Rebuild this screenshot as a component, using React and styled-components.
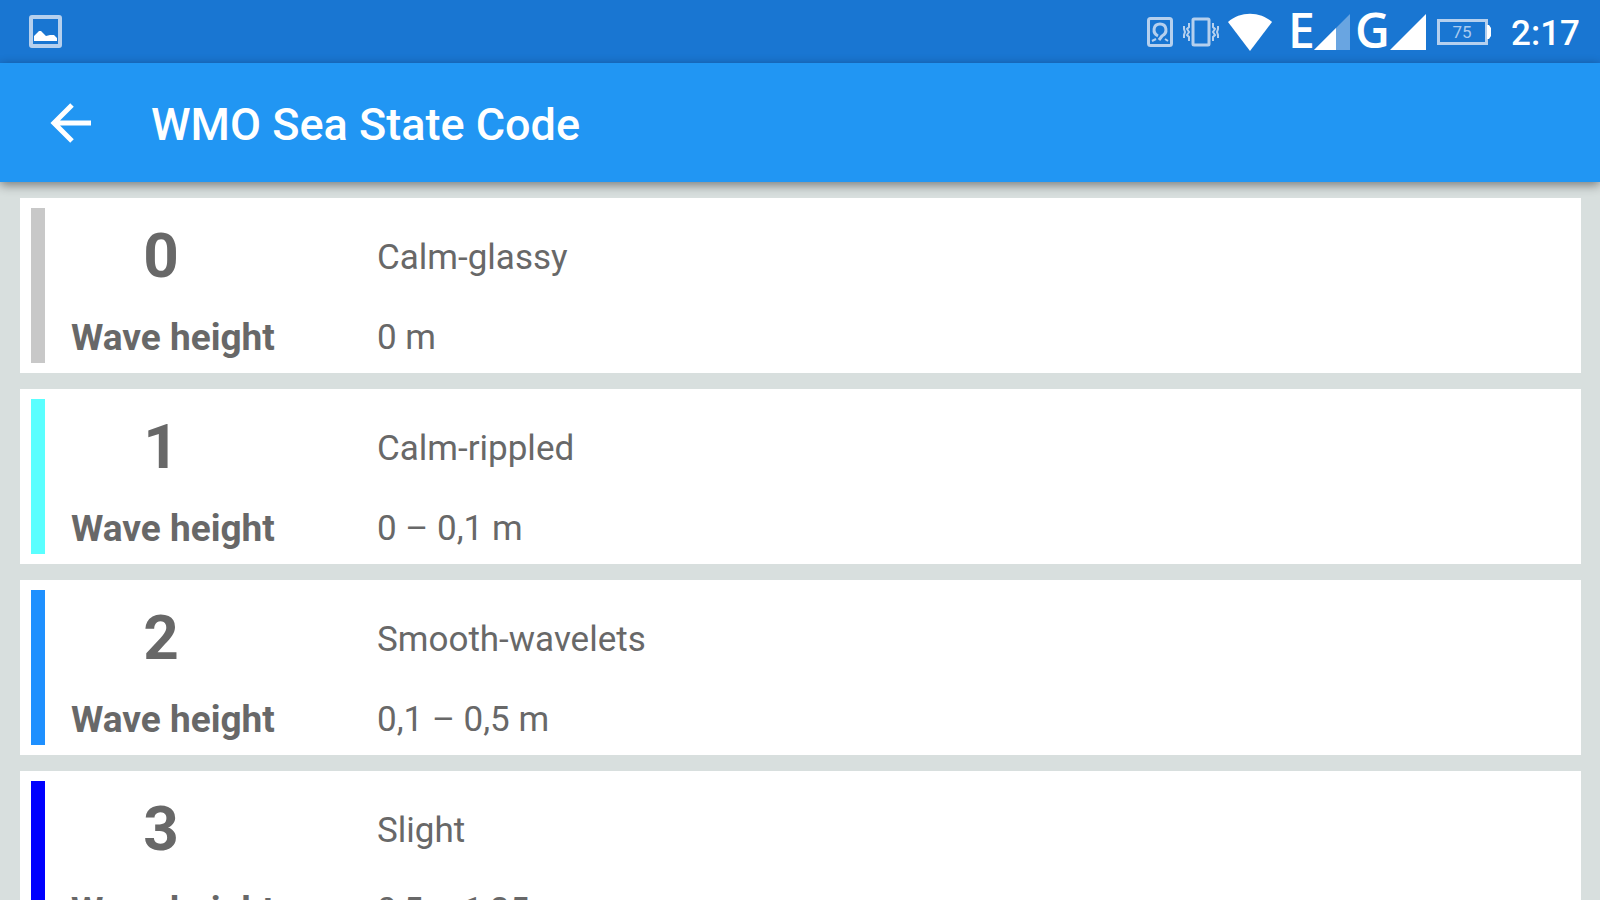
import React from 'react';
import styled, { createGlobalStyle } from 'styled-components';

const GlobalStyle = createGlobalStyle`
  html,
  body {
    margin: 0;
    background: #d8dfde;
    overflow: hidden;
  }

  * {
    box-sizing: border-box;
  }
`;

const Screen = styled.div`
  height: 100vh;
  display: flex;
  flex-direction: column;
  overflow: hidden;
  font-family: Roboto, 'Liberation Sans', sans-serif;
  color: #686868;
`;

const StatusBar = styled.div`
  flex: none;
  height: 63px;
  padding: 0 20px 0 29px;
  display: flex;
  align-items: center;
  justify-content: space-between;
  background: #1976d2;
  color: #ffffff;
`;

const StatusGroup = styled.div`
  display: flex;
  align-items: center;
`;

const StatusIcon = styled.svg`
  display: block;
  flex: none;
  margin-right: ${props => props.$gap || 0}px;
`;

const NetworkType = styled.span`
  width: ${props => props.$width}px;
  font-family: 'Open Sans', 'Noto Sans', sans-serif;
  font-size: 48px;
  font-weight: 600;
  line-height: 56px;
  padding-bottom: 4px;
`;

const BatteryText = styled.text`
  font-family: Roboto, sans-serif;
  font-size: 17px;
  fill: #a9cbef;
`;

const Clock = styled.time`
  padding-top: 4px;
  font-size: 35px;
  font-weight: 500;
  line-height: 56px;
`;

const AppBar = styled.header`
  position: relative;
  z-index: 1;
  flex: none;
  height: 119px;
  padding-left: 50px;
  display: flex;
  align-items: center;
  gap: 59px;
  background: #2196f3;
  box-shadow: 0 3px 10px rgba(0, 0, 0, 0.45);
`;

const BackButton = styled.button`
  padding: 0;
  border: 0;
  background: none;
  cursor: pointer;
`;

const Title = styled.h1`
  margin: 0;
  padding-top: 4px;
  color: #ffffff;
  font-size: 45px;
  font-weight: 500;
  line-height: 60px;
`;

const CodeList = styled.ul`
  flex: 1;
  min-height: 0;
  margin: 0;
  padding: 16px 19px 0 20px;
  display: flex;
  flex-direction: column;
  gap: 16px;
  overflow: hidden;
  list-style: none;
`;

const Card = styled.li`
  flex: none;
  padding: 10px 11px;
  display: flex;
  gap: 26px;
  background: #ffffff;
`;

const ColorStrip = styled.div`
  width: 14px;
  background: ${props => props.$color};
`;

const CardGrid = styled.div`
  flex: 1;
  display: grid;
  grid-template-columns: 306px 1fr;
  grid-template-rows: 100px 50px;
  row-gap: 5px;
  align-items: center;
`;

const Code = styled.strong`
  width: 180px;
  padding-bottom: 4px;
  font-size: 62px;
  font-weight: 700;
  line-height: 72px;
  text-align: center;
`;

const Label = styled.span`
  font-size: 37px;
  font-weight: 700;
  line-height: 48px;
`;

const Value = styled.span`
  font-size: 35px;
  line-height: 50px;
`;

const seaStates = [
  { code: 0, name: 'Calm-glassy', height: '0 m', color: '#c8c8c8' },
  { code: 1, name: 'Calm-rippled', height: '0 – 0,1 m', color: '#5affff' },
  { code: 2, name: 'Smooth-wavelets', height: '0,1 – 0,5 m', color: '#1e90ff' },
  { code: 3, name: 'Slight', height: '0,5 – 1,25 m', color: '#0000ff' },
];

const PictureIcon = () => (
  <StatusIcon width="33" height="33" viewBox="0 0 33 33">
    <rect x="2" y="2" width="29" height="29" rx="1" fill="none" stroke="#b5d0ee" strokeWidth="4" />
    <path d="M5 26v-5l5-5h2l5 5 4-1h4l3 3v3z" fill="#ffffff" />
  </StatusIcon>
);

const HotspotIcon = () => (
  <StatusIcon width="26" height="30" viewBox="0 0 26 30" $gap={10}>
    <rect x="1.5" y="1.5" width="23" height="27" rx="2" fill="none" stroke="#b5d0ee" strokeWidth="3" />
    <path
      d="M11 19C5 16 6 7 13 7s8 9 2 12l-3 4"
      fill="none"
      stroke="#b5d0ee"
      strokeWidth="3"
    />
    <path d="M5 24l4-2M21 24l-3-2" stroke="#b5d0ee" strokeWidth="2" />
  </StatusIcon>
);

const VibrateIcon = () => (
  <StatusIcon width="36" height="30" viewBox="0 0 36 30" $gap={9}>
    <g fill="none" stroke="#b5d0ee">
      <rect x="10" y="2" width="16" height="26" rx="1" strokeWidth="3" />
      <path
        d="M6 6v4l-2 2 2 3-2 3 2 2v4M1 9v3l1 3-1 3v3M30 6v4l2 2-2 3 2 3-2 2v4M35 9v3l-1 3 1 3v3"
        strokeWidth="2"
      />
    </g>
  </StatusIcon>
);

const WifiIcon = () => (
  <StatusIcon width="44" height="38" viewBox="0 0 44 38" $gap={16}>
    <path d="M0 9C12-2 32-2 44 9L22 38z" fill="#ffffff" />
  </StatusIcon>
);

const SignalIcon = ({ weak, gap }) => (
  <StatusIcon width="36" height="36" viewBox="0 0 36 36" $gap={gap}>
    <path d="M0 36L36 0V36z" fill="#ffffff" fillOpacity={weak ? 0.35 : 1} />
    {weak && <path d="M0 36L22 14V36z" fill="#ffffff" />}
  </StatusIcon>
);

const BatteryIcon = () => (
  <StatusIcon width="54" height="26" viewBox="0 0 54 26" $gap={20}>
    <rect x="1.5" y="1.5" width="48" height="23" fill="none" stroke="#b5d0ee" strokeWidth="3" />
    <path d="M50 6h2l2 3v8l-2 3h-2z" fill="#ffffff" />
    <BatteryText x="25" y="19" textAnchor="middle">75</BatteryText>
  </StatusIcon>
);

const App = () => {
  return (
    <Screen>
      <GlobalStyle />
      <StatusBar>
        <PictureIcon />
        <StatusGroup>
          <HotspotIcon />
          <VibrateIcon />
          <WifiIcon />
          <NetworkType $width={26}>E</NetworkType>
          <SignalIcon weak gap={5} />
          <NetworkType $width={35}>G</NetworkType>
          <SignalIcon gap={11} />
          <BatteryIcon />
          <Clock>2:17</Clock>
        </StatusGroup>
      </StatusBar>
      <AppBar>
        <BackButton type="button" aria-label="Back">
          <svg width="42" height="40" viewBox="0 0 42 40" display="block">
            <path d="M41 20H4M22 2L4 20l18 18" fill="none" stroke="#ffffff" strokeWidth="5" />
          </svg>
        </BackButton>
        <Title>WMO Sea State Code</Title>
      </AppBar>
      <CodeList>
        {seaStates.map(({ code, name, height, color }) => (
          <Card key={code}>
            <ColorStrip $color={color} />
            <CardGrid>
              <Code>{code}</Code>
              <Value>{name}</Value>
              <Label>Wave height</Label>
              <Value>{height}</Value>
            </CardGrid>
          </Card>
        ))}
      </CodeList>
    </Screen>
  );
};

export default App;
